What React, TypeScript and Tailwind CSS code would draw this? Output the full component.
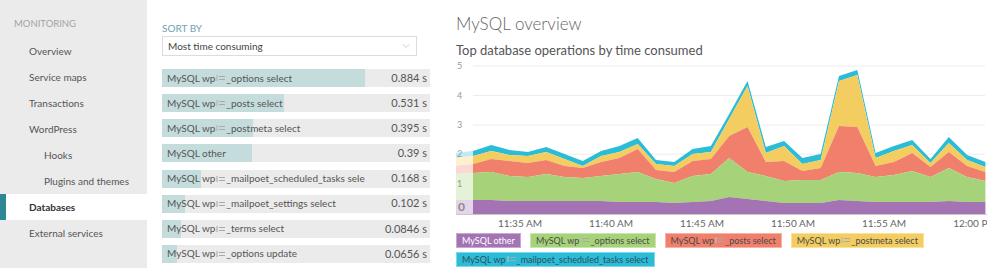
import { ChevronDown } from "lucide-react";

const font = { fontFamily: "Lato, 'Open Sans', sans-serif" };

// little blurred stand-in for the hidden table prefix
function Redact({ light = false }: { light?: boolean }) {
  return (
    <span className="inline-flex items-center gap-[1px] mx-[1px] align-middle -mt-[2px]">
      <span className={`inline-block w-[2px] h-[6px] ${light ? "bg-white/50" : "bg-[#b9b9b9]"} opacity-70 blur-[0.4px]`} />
      <span className={`inline-block w-[6px] h-[4px] border-y ${light ? "border-white/60" : "border-[#a9a9a9]"} blur-[0.4px]`} />
    </span>
  );
}

const navItems = [
  { label: "Overview", sub: false },
  { label: "Service maps", sub: false },
  { label: "Transactions", sub: false },
  { label: "WordPress", sub: false },
  { label: "Hooks", sub: true },
  { label: "Plugins and themes", sub: true },
  { label: "Databases", sub: false, active: true },
  { label: "External services", sub: false },
];

const ops = [
  { pre: "MySQL wp", post: "_options select", value: 0.884, text: "0.884 s" },
  { pre: "MySQL wp", post: "_posts select", value: 0.531, text: "0.531 s" },
  { pre: "MySQL wp", post: "_postmeta select", value: 0.395, text: "0.395 s" },
  { pre: "MySQL other", post: "", value: 0.39, text: "0.39 s", plain: true },
  { pre: "MySQL wp", post: "_mailpoet_scheduled_tasks select", value: 0.168, text: "0.168 s" },
  { pre: "MySQL wp", post: "_mailpoet_settings select", value: 0.102, text: "0.102 s" },
  { pre: "MySQL wp", post: "_terms select", value: 0.0846, text: "0.0846 s" },
  { pre: "MySQL wp", post: "_options update", value: 0.0656, text: "0.0656 s" },
];

// layer tops in screen pixels (baseline 215), one point per minute
const purple = [201,201,201,202,202,202,202,202,202,203,203,203,204,203,202,198,200,202,204,204,204,201,202,203,203,203,203,202,203,203];
const green = [175,174,173,177,178,175,178,179,177,175,173,180,184,177,175,159,173,177,182,181,181,173,174,178,176,172,178,169,178,182];
const red = [167,165,160,162,164,161,167,169,163,159,150,171,173,162,160,137,128,163,162,172,169,127,128,167,163,154,168,153,167,173];
const yellow = [159,157,152,156,157,153,160,167,157,153,145,165,167,155,153,120,87,154,147,165,161,82,76,159,152,146,164,144,161,168];
const cyan = [154,152,146,151,153,148,155,162,152,147,139,161,163,150,147,115,82,148,142,159,155,77,71,154,147,141,160,138,156,163];

const X0 = 456;
const Y0 = 60;
const xs = purple.map((_, i) => 454.7 + i * 18.3 - X0);

function area(top: number[], bottom: number[] | null) {
  const up = top.map((y, i) => `${xs[i].toFixed(1)},${y - Y0}`);
  const down = bottom
    ? bottom.map((y, i) => `${xs[i].toFixed(1)},${y - Y0}`).reverse()
    : [`${xs[xs.length - 1].toFixed(1)},${215 - Y0}`, `${xs[0].toFixed(1)},${215 - Y0}`];
  return `M${up.join(" L")} L${down.join(" L")} Z`;
}

const grid = [
  { label: "5", y: 67 },
  { label: "4", y: 96.5 },
  { label: "3", y: 126 },
  { label: "2", y: 155.2 },
  { label: "1", y: 184.6 },
];

const times = [
  { t: "11:35 AM", x: 520 },
  { t: "11:40 AM", x: 611 },
  { t: "11:45 AM", x: 702 },
  { t: "11:50 AM", x: 793 },
  { t: "11:55 AM", x: 884 },
  { t: "12:00 PM", x: 975 },
];

function Chart() {
  return (
    <svg width={531} height={172} className="block overflow-hidden">
      {grid.map((g) => (
        <line key={g.label} x1={17} x2={529} y1={g.y - Y0} y2={g.y - Y0} stroke="#ececec" strokeWidth={1} />
      ))}
      <path d={area(cyan, yellow)} fill="#2bbcd8" />
      <path d={area(yellow, red)} fill="#f4cd60" />
      <path d={area(red, green)} fill="#f07f6b" />
      <path d={area(green, purple)} fill="#a6d379" />
      <path d={area(purple, null)} fill="#a473b3" />
      <rect x={0} y={0} width={17} height={215 - Y0} fill="#ffffff" opacity={0.7} />
      <line x1={0} x2={531} y1={215.5 - Y0} y2={215.5 - Y0} stroke="#c8c8c8" strokeWidth={1} />
      {grid.map((g) => (
        <text key={g.label} x={1} y={g.y - Y0 + 3} fontSize={9} fill="#999" style={font}>
          {g.label}
        </text>
      ))}
      <text x={2} y={212 - Y0} fontSize={12} fontWeight={700} fill="#8a8a8a" style={font}>
        0
      </text>
      {times.map((t) => (
        <text key={t.t} x={t.x - X0} y={228 - Y0} fontSize={10} fill="#666" textAnchor="middle" style={font}>
          {t.t}
        </text>
      ))}
    </svg>
  );
}

const legend = [
  { pre: "MySQL other", post: "", cls: "bg-[#a473b3] border-[#c9a9d4] text-white", plain: true },
  { pre: "MySQL wp", post: "_options select", cls: "bg-[#a6d379] border-[#c9e6ad] text-[#4a4a4a]" },
  { pre: "MySQL wp", post: "_posts select", cls: "bg-[#f07f6b] border-[#f7b3a6] text-[#4a4a4a]" },
  { pre: "MySQL wp", post: "_postmeta select", cls: "bg-[#f4cd60] border-[#f8e29f] text-[#4a4a4a]" },
  { pre: "MySQL wp", post: "_mailpoet_scheduled_tasks select", cls: "bg-[#2bbcd8] border-[#80d8e8] text-[#2f4f5a]" },
];

export default function App() {
  return (
    <div className="flex w-[1000px] h-[268px] bg-white overflow-hidden" style={font}>
      {/* sidebar */}
      <div className="w-[147px] h-full bg-[#ebebeb] shrink-0">
        <div className="pt-[18px] pl-[14px] text-[9.5px] leading-[12px] text-[#a3a3a3] uppercase mb-[8px]">Monitoring</div>
        {navItems.map((n) =>
          n.active ? (
            <div key={n.label} className="flex h-[26px] items-center bg-white">
              <div className="w-[6px] h-full bg-[#2d8797]" />
              <span className="pl-[23px] text-[10px] font-bold text-[#333]">{n.label}</span>
            </div>
          ) : (
            <div
              key={n.label}
              className={`flex h-[26px] items-center text-[10px] text-[#555] ${n.sub ? "pl-[44px]" : "pl-[29px]"}`}
            >
              {n.label}
            </div>
          )
        )}
      </div>

      {/* operations list */}
      <div className="w-[268px] ml-[15px] shrink-0 pt-[22px]">
        <div className="text-[10px] leading-[13px] text-[#6fa1b2] uppercase">Sort by</div>
        <div className="mt-[1px] w-[255px] h-[20px] border border-[#dcdcdc] flex items-center justify-between pl-[5px] pr-[4px]">
          <span className="text-[10px] text-[#444]">Most time consuming</span>
          <ChevronDown size={12} strokeWidth={1.2} color="#b5b5b5" />
        </div>
        <div className="mt-[13px] flex flex-col gap-[7.15px]">
          {ops.map((o) => (
            <div key={o.post + o.pre} className="relative h-[18px] bg-[#ebebeb]">
              <div className="absolute left-0 top-0 bottom-0 bg-[#c4dddc]" style={{ width: (o.value / 0.884) * 203 }} />
              <div className="relative flex h-full items-center text-[10px] text-[#555]">
                <div className="w-[203px] pl-[5px] overflow-hidden whitespace-nowrap">
                  {o.pre}
                  {!o.plain && <Redact />}
                  {o.post}
                </div>
                <div className="flex-1 text-right pr-[3px] text-[11px] whitespace-nowrap">{o.text}</div>
              </div>
            </div>
          ))}
        </div>
      </div>

      {/* chart */}
      <div className="ml-[26px] flex-1 pt-[12px]">
        <div className="text-[17px] leading-[24px] font-light text-[#666]">MySQL overview</div>
        <div className="mt-[5px] text-[13px] leading-[18px] text-[#555]">Top database operations by time consumed</div>
        <Chart />
        <div className="mt-[2px] w-[531px] flex flex-wrap gap-x-[9px] gap-y-[4px]">
          {legend.map((l) => (
            <div
              key={l.post + l.pre}
              className={`h-[15px] px-[5px] border flex items-center text-[9px] whitespace-nowrap ${l.cls}`}
            >
              {l.pre}
              {!l.plain && <Redact />}
              {l.post}
            </div>
          ))}
        </div>
      </div>
    </div>
  );
}
